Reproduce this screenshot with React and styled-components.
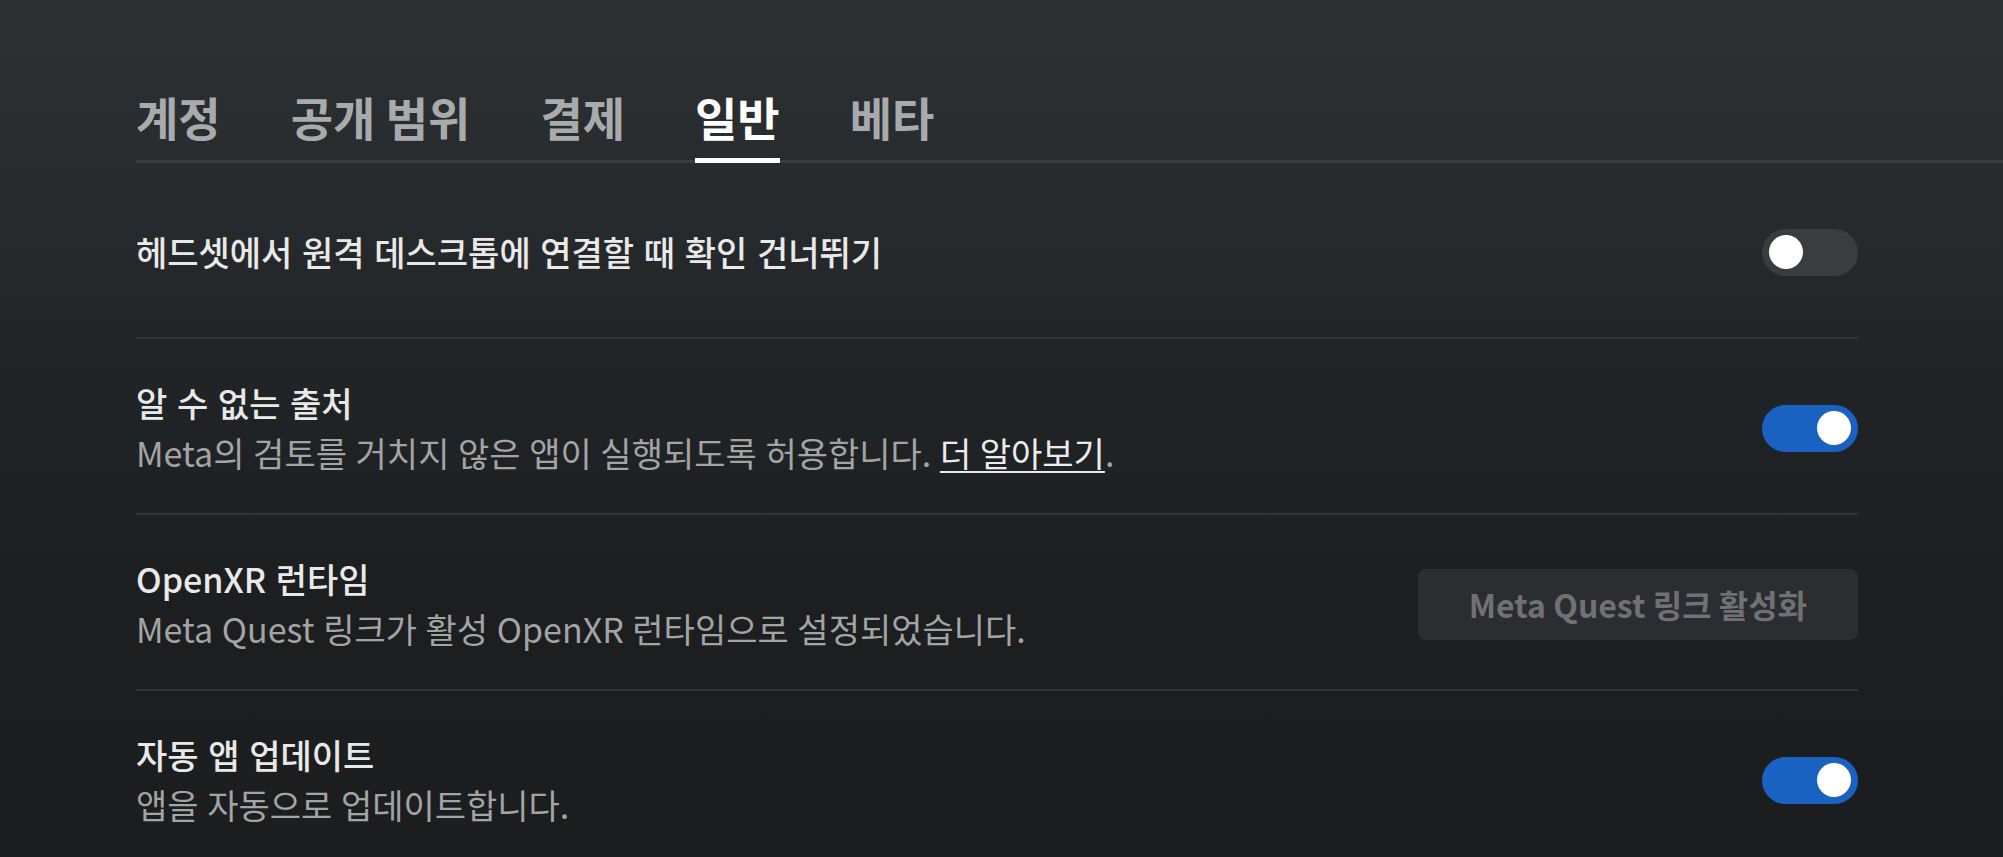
import React, { useState } from "react";
import styled, { createGlobalStyle } from "styled-components";

const GlobalStyle = createGlobalStyle`
  html, body {
    margin: 0;
    padding: 0;
    background: #1b1d1f;
  }
  body {
    font-family: "Noto Sans CJK KR", "Noto Sans", sans-serif;
    -webkit-font-smoothing: antialiased;
  }
  * { box-sizing: border-box; }
`;

const Page = styled.div`
  width: 100%;
  min-height: 100vh;
  padding: 86px 0 0 136px;
  background: linear-gradient(
    180deg,
    #2d3133 0%,
    #282b2d 22%,
    #212426 45%,
    #1c1e20 70%,
    #1b1d1f 100%
  );
  overflow: hidden;
`;

const TabBar = styled.nav`
  display: flex;
  gap: 70px;
  border-bottom: 3px solid #3a3e41;
`;

const Tab = styled.button`
  position: relative;
  background: none;
  border: none;
  padding: 0 0 14px;
  margin: 0;
  font-family: inherit;
  font-size: 46px;
  font-weight: 700;
  line-height: 60px;
  color: ${(p) => (p.$active ? "#ffffff" : "#a8abad")};
  cursor: pointer;
  white-space: nowrap;

  &::after {
    content: "";
    display: ${(p) => (p.$active ? "block" : "none")};
    position: absolute;
    left: 0;
    right: 0;
    bottom: -3px;
    height: 5px;
    background: #ffffff;
  }
`;

const List = styled.div`
  display: flex;
  flex-direction: column;
  margin-right: 145px;
`;

const Row = styled.div`
  display: flex;
  align-items: center;
  justify-content: space-between;
  height: 176px;
  padding-top: 4px;
  border-bottom: 2px solid #313437;
`;

const TextBlock = styled.div`
  display: flex;
  flex-direction: column;
`;

const Title = styled.div`
  font-size: 34px;
  line-height: 44px;
  font-weight: 500;
  color: #e9e9e9;
  word-spacing: 2px;
  white-space: nowrap;
`;

const Desc = styled.div`
  margin-top: 6px;
  font-size: 34px;
  line-height: 44px;
  font-weight: 400;
  color: #a2a4a6;
  word-spacing: 1px;
  white-space: nowrap;
`;

const Link = styled.a`
  color: #ececec;
  text-decoration: underline;
  text-decoration-thickness: 2px;
  text-underline-offset: 4px;
  cursor: pointer;
`;

const Track = styled.button`
  display: flex;
  align-items: center;
  justify-content: ${(p) => (p.$on ? "flex-end" : "flex-start")};
  width: 96px;
  height: 47px;
  padding: 0 7px;
  border: none;
  border-radius: 24px;
  background: ${(p) => (p.$on ? "#1a62c2" : "#3a3c3f")};
  cursor: pointer;
  flex-shrink: 0;
`;

const Knob = styled.span`
  display: block;
  width: 34px;
  height: 34px;
  border-radius: 50%;
  background: #ffffff;
`;

const ActionButton = styled.button`
  width: 440px;
  height: 71px;
  border: none;
  border-radius: 8px;
  background: #2b2d30;
  color: #6f7174;
  font-family: inherit;
  font-size: 32px;
  font-weight: 600;
  white-space: nowrap;
  cursor: default;
  flex-shrink: 0;
`;

function Toggle({ initial }) {
  const [on, setOn] = useState(initial);
  return (
    <Track $on={on} onClick={() => setOn(!on)} aria-pressed={on}>
      <Knob />
    </Track>
  );
}

const tabs = ["계정", "공개 범위", "결제", "일반", "베타"];

export default function App() {
  const [active, setActive] = useState("일반");
  return (
    <>
      <GlobalStyle />
      <Page>
        <TabBar>
          {tabs.map((t) => (
            <Tab key={t} $active={t === active} onClick={() => setActive(t)}>
              {t}
            </Tab>
          ))}
        </TabBar>
        <List>
          <Row>
            <TextBlock>
              <Title>헤드셋에서 원격 데스크톱에 연결할 때 확인 건너뛰기</Title>
            </TextBlock>
            <Toggle initial={false} />
          </Row>
          <Row>
            <TextBlock>
              <Title>알 수 없는 출처</Title>
              <Desc>
                Meta의 검토를 거치지 않은 앱이 실행되도록 허용합니다.{" "}
                <Link>더 알아보기</Link>.
              </Desc>
            </TextBlock>
            <Toggle initial={true} />
          </Row>
          <Row>
            <TextBlock>
              <Title>OpenXR 런타임</Title>
              <Desc>Meta Quest 링크가 활성 OpenXR 런타임으로 설정되었습니다.</Desc>
            </TextBlock>
            <ActionButton disabled>Meta Quest 링크 활성화</ActionButton>
          </Row>
          <Row>
            <TextBlock>
              <Title>자동 앱 업데이트</Title>
              <Desc>앱을 자동으로 업데이트합니다.</Desc>
            </TextBlock>
            <Toggle initial={true} />
          </Row>
        </List>
      </Page>
    </>
  );
}
